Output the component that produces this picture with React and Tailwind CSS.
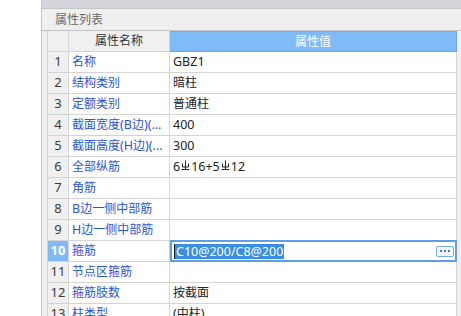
import React from "react";

const FONT = { fontFamily: '"Noto Sans", "Noto Sans CJK SC", sans-serif' };

function Mixed({ text }) {
  const parts = text.match(/[\u4e00-\u9fff]+|[^\u4e00-\u9fff]+/g) || [];
  return parts.map((p, i) =>
    /[\u4e00-\u9fff]/.test(p) ? (
      <span key={i}>{p}</span>
    ) : (
      <span key={i} className="text-[12.5px]">{p}</span>
    )
  );
}

function Rebar() {
  return (
    <svg width="9" height="11" viewBox="0 0 9 11" className="inline-block mx-[1px] -mt-[4px] align-middle">
      <path d="M4.5 0.5V10" stroke="#222" strokeWidth="1" fill="none" />
      <path d="M1.5 3.5V7H7.5V3.5" stroke="#222" strokeWidth="1" fill="none" />
      <path d="M0.5 9.5H8.5" stroke="#222" strokeWidth="1" fill="none" />
    </svg>
  );
}

const rows = [
  ["名称", "GBZ1"],
  ["结构类别", "暗柱"],
  ["定额类别", "普通柱"],
  ["截面宽度(B边)(...", "400"],
  ["截面高度(H边)(...", "300"],
  ["全部纵筋", "rebar"],
  ["角筋", ""],
  ["B边一侧中部筋", ""],
  ["H边一侧中部筋", ""],
  ["箍筋", "edit"],
  ["节点区箍筋", ""],
  ["箍筋肢数", "按截面"],
  ["柱类型", "(中柱)"],
];

function Value({ v }) {
  if (v === "rebar") {
    return (
      <span className="pl-[3px] text-[#222] text-[12.5px]">
        6<Rebar />16+5<Rebar />12
      </span>
    );
  }
  return (
    <span className="pl-[3px] text-[#222]">
      <Mixed text={v} />
    </span>
  );
}

export default function App() {
  return (
    <div className="w-[461px] h-[316px] flex overflow-hidden bg-white text-[12px]" style={FONT}>
      <div className="w-[41px] h-full bg-white shrink-0" />
      <div className="w-[1px] h-full bg-[#c4c4c4] shrink-0" />
      <div className="flex-1 flex flex-col bg-[#efefef] min-w-0">
        <div className="h-[9px] shrink-0 bg-[#d5d6db] border-b border-[#c6c6c6]" />
        <div className="h-[22px] shrink-0 flex items-center pl-[13px] text-[#6a6a6a] border-b border-[#c4c4c4]">
          属性列表
        </div>
        <div className="ml-[5px] w-[409px] border-l border-[#d4d4d4] flex flex-col">
          <div className="grid grid-cols-[21px_101px_287px] h-[21px]">
            <div className="bg-[#f0f0f0] border-r border-b border-[#d4d4d4]" />
            <div className="bg-[#f0f0f0] border-r border-b border-[#d4d4d4] flex items-center justify-center text-[#333]">
              属性名称
            </div>
            <div className="bg-[#80bbf8] border-r border-b border-t border-t-[#74b1f1] border-[#6aa5e6] flex items-center justify-center text-white">
              属性值
            </div>
          </div>
          {rows.map(([name, v], i) => {
            const sel = v === "edit";
            return (
              <div key={i} className="grid grid-cols-[21px_101px_287px] h-[21px] shrink-0">
                <div
                  className={
                    sel
                      ? "bg-[#7fbaf7] border-r border-b border-[#d4d4d4] flex items-center justify-center text-white font-bold text-[13px]"
                      : "bg-[#f0f0f0] border-r border-b border-[#d4d4d4] flex items-center justify-center text-[#3a3a3a] text-[13px]"
                  }
                >
                  {i + 1}
                </div>
                <div className="bg-white border-r border-b border-[#d4d4d4] flex items-center pl-[3px] text-[#2b55d9] whitespace-nowrap overflow-hidden">
                  <Mixed text={name} />
                </div>
                {sel ? (
                  <div className="bg-white border-2 border-[#5e9fe6] -mt-[1px] h-[22px] flex items-center pl-[2px] pr-[1px]">
                    <span className="w-[1px] h-[15px] bg-[#1a1a1a] shrink-0" />
                    <span className="bg-[#3a8ee6] text-white h-[15px] leading-[15px] px-[1px] text-[12.5px]">C10@200/C8@200</span>
                    <span className="flex-1" />
                    <span className="w-[18px] h-[11px] border border-[#79ace5] rounded-[2px] bg-[#f4f8fd] flex items-center justify-center gap-[2px]">
                      <span className="w-[2px] h-[2px] bg-[#3a7fd8]" />
                      <span className="w-[2px] h-[2px] bg-[#3a7fd8]" />
                      <span className="w-[2px] h-[2px] bg-[#3a7fd8]" />
                    </span>
                  </div>
                ) : (
                  <div className="bg-white border-r border-b border-[#d4d4d4] flex items-center whitespace-nowrap overflow-hidden">
                    <Value v={v} />
                  </div>
                )}
              </div>
            );
          })}
        </div>
      </div>
    </div>
  );
}
